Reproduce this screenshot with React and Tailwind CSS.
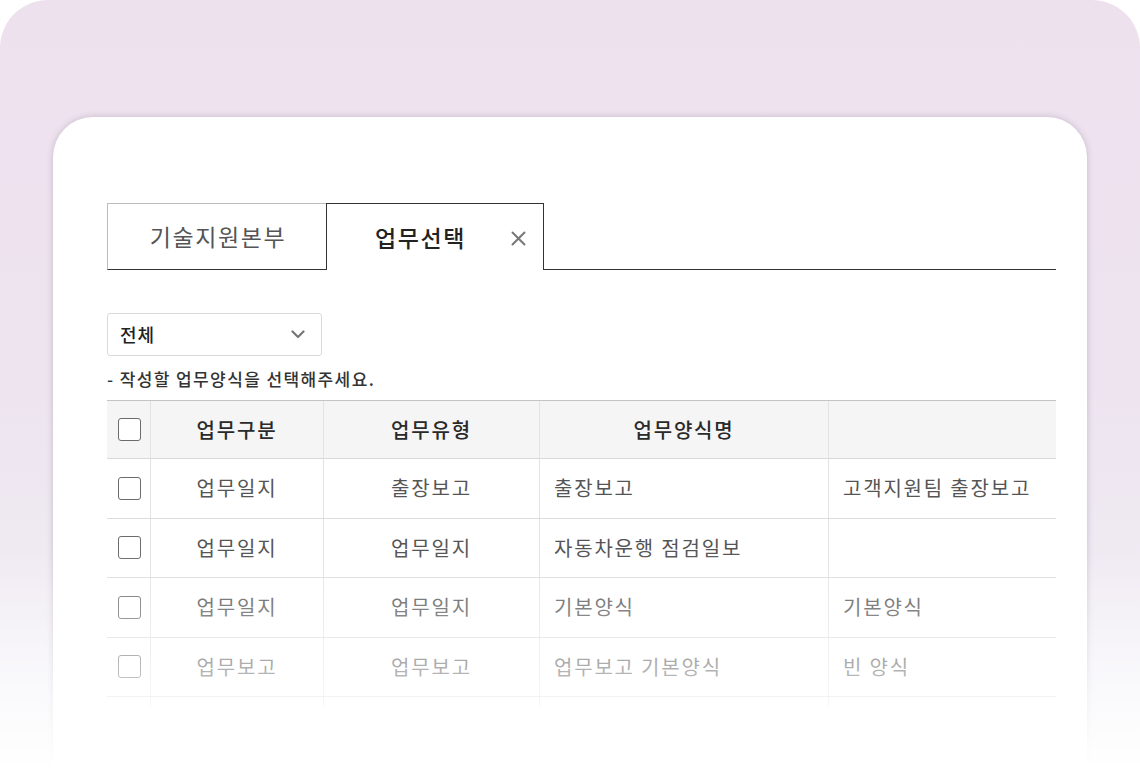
import React from 'react';

const ROWS = [
  { kind: '업무일지', type: '출장보고', name: '출장보고', desc: '고객지원팀 출장보고' },
  { kind: '업무일지', type: '업무일지', name: '자동차운행 점검일보', desc: '' },
  { kind: '업무일지', type: '업무일지', name: '기본양식', desc: '기본양식' },
  { kind: '업무보고', type: '업무보고', name: '업무보고 기본양식', desc: '빈 양식' },
];

const COLS = 'grid grid-cols-[44px_173px_216px_289px_1fr]';

function Checkbox() {
  return <span className="block w-[23px] h-[23px] rounded-[3px] border-[1.5px] border-[#6b6b6b] bg-white" />;
}

export default function App() {
  return (
    <div
      className="relative w-[1140px] h-[780px] overflow-hidden bg-white"
      style={{ fontFamily: '"Noto Sans CJK KR", "Noto Sans", sans-serif' }}
    >
      {/* lavender frame */}
      <div className="h-full rounded-t-[48px] bg-gradient-to-b from-[#ede1ee] via-[#ede4ef] to-[#f2f2f7] pt-[117px] px-[53px]">
        {/* card */}
        <div className="h-full rounded-t-[40px] bg-white shadow-[0_0_6px_rgba(80,60,90,0.25)] pt-[86px] pl-[54px] pr-[31px]">
          {/* tabs */}
          <div className="flex h-[67px]">
            <div className="w-[219px] flex items-center justify-center pl-[2px] border-t border-l border-[#bdbdbd] border-b border-b-[#333] text-[23px] text-[#555] tracking-[1.6px]">
              기술지원본부
            </div>
            <div className="w-[218px] flex items-center justify-between pl-[48px] pr-[17px] border border-b-0 border-[#333] text-[23px] font-medium text-[#222] tracking-[1.6px]">
              <span>업무선택</span>
              <svg width="15" height="15" viewBox="0 0 15 15" className="mt-[2px]">
                <path d="M1.5 1.5 L13.5 13.5 M13.5 1.5 L1.5 13.5" stroke="#777" strokeWidth="2" strokeLinecap="round" />
              </svg>
            </div>
            <div className="flex-1 border-b border-[#333]" />
          </div>

          {/* select */}
          <div className="mt-[43px] w-[215px] h-[43px] flex items-center justify-between pl-[12px] pr-[16px] border border-[#dadada] rounded-[3px]">
            <span className="text-[18px] font-medium text-[#222] tracking-[1px]">전체</span>
            <svg width="14" height="9" viewBox="0 0 14 9">
              <path d="M1.5 1.5 L7 7 L12.5 1.5" fill="none" stroke="#777" strokeWidth="2.2" strokeLinecap="round" strokeLinejoin="round" />
            </svg>
          </div>

          <p className="mt-[12px] text-[17px] font-medium text-[#333] tracking-[1.4px] leading-[22px]">
            - 작성할 업무양식을 선택해주세요.
          </p>

          {/* table */}
          <div className="mt-[10px] h-[306px] overflow-hidden border-t border-[#c4c4c4]">
            <div className={`${COLS} h-[58px] bg-[#f5f5f5] border-b border-[#d9d9d9] text-[20px] font-medium text-[#2a2a2a] tracking-[1.8px]`}>
              <div className="flex items-center pl-[11px] border-r border-[#e3e3e3]"><Checkbox /></div>
              <div className="flex items-center justify-center border-r border-[#e3e3e3]">업무구분</div>
              <div className="flex items-center justify-center border-r border-[#e3e3e3]">업무유형</div>
              <div className="flex items-center justify-center border-r border-[#e3e3e3]">업무양식명</div>
              <div />
            </div>
            {ROWS.map((r, i) => (
              <div key={i} className={`${COLS} h-[59.5px] border-b border-[#dcdcdc] text-[20px] text-[#555] tracking-[1.8px]`}>
                <div className="flex items-center pl-[11px] border-r border-[#e3e3e3]"><Checkbox /></div>
                <div className="flex items-center justify-center border-r border-[#e3e3e3]">{r.kind}</div>
                <div className="flex items-center justify-center border-r border-[#e3e3e3]">{r.type}</div>
                <div className="flex items-center pl-[14px] border-r border-[#e3e3e3]">{r.name}</div>
                <div className="flex items-center pl-[14px] whitespace-nowrap">{r.desc}</div>
              </div>
            ))}
            {/* next row, cut by the fade */}
            <div className={`${COLS} h-[59.5px]`}>
              <div className="border-r border-[#e3e3e3]" />
              <div className="border-r border-[#e3e3e3]" />
              <div className="border-r border-[#e3e3e3]" />
              <div className="border-r border-[#e3e3e3]" />
              <div />
            </div>
          </div>
        </div>
      </div>

      {/* bottom fade */}
      <div className="absolute inset-x-0 top-[550px] h-[220px] bg-gradient-to-b from-white/0 to-white" />
      <div className="absolute inset-x-0 top-[770px] bottom-0 bg-white" />
    </div>
  );
}
